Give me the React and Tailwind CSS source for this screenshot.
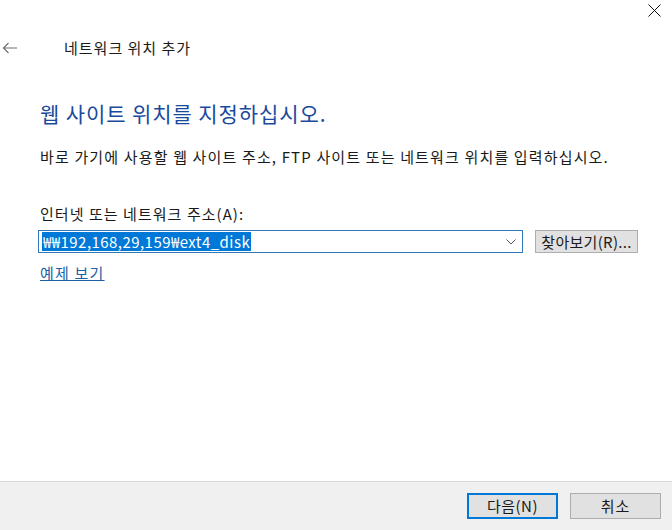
const font = { fontFamily: '"Noto Sans CJK KR", "Noto Sans", sans-serif' };

export default function App() {
  return (
    <div
      className="w-[672px] h-[530px] bg-white flex flex-col text-[#1a1a1a] overflow-hidden"
      style={font}
    >
      {/* window close */}
      <div className="flex justify-end h-[24px] pt-[4px] pr-[11px]">
        <svg width="13" height="13" viewBox="0 0 13 13">
          <path d="M0.5 0.5 L12.5 12.5 M12.5 0.5 L0.5 12.5" stroke="#111" strokeWidth="1" />
        </svg>
      </div>

      {/* header */}
      <div className="flex items-center h-[48px]">
        <svg className="ml-[2px]" width="16" height="12" viewBox="0 0 16 12">
          <path d="M15 6 H1.5 M6.5 1 L1.5 6 L6.5 11" fill="none" stroke="#707070" strokeWidth="1.2" />
        </svg>
        <span className="ml-[46px] text-[15px] leading-[20px] tracking-[1px]">네트워크 위치 추가</span>
      </div>

      <div className="pl-[40px] flex flex-col">
        <h1 className="mt-[27px] text-[21px] leading-[28px] tracking-[0.9px] text-[#1a4a9c] font-normal">
          웹 사이트 위치를 지정하십시오.
        </h1>
        <p className="mt-[20px] text-[15px] leading-[20px] tracking-[1.15px]">
          바로 가기에 사용할 웹 사이트 주소, FTP 사이트 또는 네트워크 위치를 입력하십시오.
        </p>
        <label className="mt-[37px] text-[15px] leading-[20px] tracking-[1.05px]">인터넷 또는 네트워크 주소(A):</label>

        <div className="mt-[6px] ml-[-2px] flex items-center gap-[12px]">
          <div className="w-[485px] h-[23px] border border-[#2f79b9] flex items-center pl-[3px] pr-[6px]">
            <span className="bg-[#0078d7] text-white text-[15px] leading-[19px] tracking-[0.45px] px-[1px] flex-none">
              ₩₩192,168,29,159₩ext4_disk
            </span>
            <div className="flex-1" />
            <svg width="10" height="6" viewBox="0 0 10 6">
              <path d="M0.5 0.5 L5 5 L9.5 0.5" fill="none" stroke="#555" strokeWidth="1" />
            </svg>
          </div>
          <button className="w-[103px] h-[23px] bg-[#e1e1e1] border border-[#adadad] text-[15px] leading-[19px] tracking-[0.3px] flex items-center justify-center">
            찾아보기(R)...
          </button>
        </div>

        <a className="mt-[10px] text-[15px] leading-[20px] tracking-[1.2px] text-[#1a5fa8] underline w-fit">예제 보기</a>
      </div>

      <div className="flex-1" />

      {/* footer */}
      <div className="h-[49px] bg-[#f0f0f0] border-t border-[#dadada] flex justify-end items-start pt-[11px] pr-[11px] gap-[12px]">
        <button className="w-[91px] h-[26px] bg-[#e1e1e1] border-2 border-[#0078d7] text-[15px] tracking-[0.5px] flex items-center justify-center">
          다음(N)
        </button>
        <button className="w-[91px] h-[26px] bg-[#e1e1e1] border border-[#adadad] text-[15px] tracking-[1px] flex items-center justify-center">
          취소
        </button>
      </div>
    </div>
  );
}
